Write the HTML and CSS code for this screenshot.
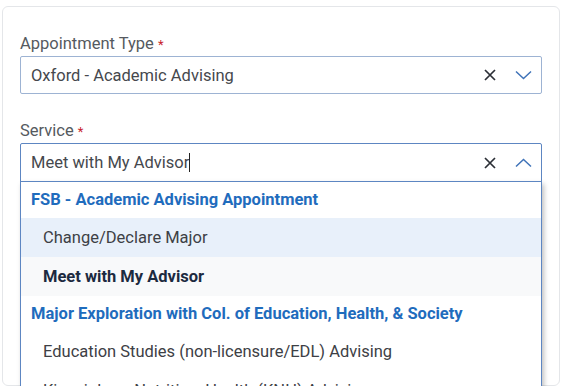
FILE: index.html
```html
<!DOCTYPE html>
<html lang="en">
<head>
    <meta charset="UTF-8">
    <title>Schedule Appointment</title>
    <link rel="stylesheet" href="styles.css">
</head>
<body>
    <div class="card">
        <div class="field">
            <label class="field-label">Appointment Type <span class="req">*</span></label>
            <div class="select">
                <span class="select-value">Oxford - Academic Advising</span>
                <span class="select-clear">
                    <svg width="12" height="12" viewBox="0 0 12 12"><path d="M1 1 L11 11 M11 1 L1 11" stroke="#2b2f36" stroke-width="1.7" fill="none"/></svg>
                </span>
                <span class="select-arrow">
                    <svg width="17" height="10" viewBox="0 0 17 10"><path d="M1 1.5 L8.5 8.5 L16 1.5" stroke="#3f73b8" stroke-width="1.5" fill="none"/></svg>
                </span>
            </div>
        </div>

        <div class="field">
            <label class="field-label">Service <span class="req">*</span></label>
            <div class="combo">
                <div class="select select-open">
                    <span class="select-value">Meet with My Advisor<span class="caret"></span></span>
                    <span class="select-clear">
                        <svg width="12" height="12" viewBox="0 0 12 12"><path d="M1 1 L11 11 M11 1 L1 11" stroke="#2b2f36" stroke-width="1.7" fill="none"/></svg>
                    </span>
                    <span class="select-arrow">
                        <svg width="17" height="10" viewBox="0 0 17 10"><path d="M1 8.5 L8.5 1.5 L16 8.5" stroke="#3f73b8" stroke-width="1.5" fill="none"/></svg>
                    </span>
                </div>
                <ul class="menu">
                    <li class="menu-group">FSB - Academic Advising Appointment</li>
                    <li class="menu-item hover">Change/Declare Major</li>
                    <li class="menu-item selected">Meet with My Advisor</li>
                    <li class="menu-group">Major Exploration with Col. of Education, Health, &amp; Society</li>
                    <li class="menu-item">Education Studies (non-licensure/EDL) Advising</li>
                    <li class="menu-item">Kinesiology, Nutrition, Health (KNH) Advising</li>
                </ul>
            </div>
        </div>
    </div>
</body>
</html>
```

FILE: styles.css
```css
body {
    margin: 0;
    background: #ffffff;
    font-family: Roboto, "Liberation Sans", Arial, sans-serif;
    overflow: hidden;
}
.card {
    margin: 6px 7px 0 2px;
    height: 380px;
    box-sizing: border-box;
    padding: 28px 17px 0 17px;
    background: white;
    border: 1px solid #e4e6e9;
    border-radius: 6px;
}
.field {
    margin-bottom: 28px;
}
.field-label {
    display: block;
    font-size: 16.5px;
    line-height: 18px;
    color: #555a60;
    margin-bottom: 2px;
}
.req {
    color: #c8242c;
    font-size: 13px;
}
.select {
    display: flex;
    align-items: center;
    height: 38px;
    box-sizing: border-box;
    border: 1px solid #9db3d3;
    border-radius: 2px;
    padding: 0 9px 0 10px;
    background: white;
}
.select-value {
    flex: 1;
    font-size: 16.5px;
    color: #45484d;
}
.select-clear {
    display: flex;
    margin-right: 19px;
}
.select-arrow {
    display: flex;
}
.combo {
    position: relative;
}
.select-open {
    height: 39px;
    border-color: #5d86c2;
    border-radius: 2px 2px 0 0;
}
.caret {
    display: inline-block;
    width: 1px;
    height: 19px;
    background: #222;
    vertical-align: -4px;
}
.menu {
    position: absolute;
    left: 0;
    right: 0;
    top: 38px;
    margin: 0;
    padding: 0;
    list-style: none;
    background: white;
    border: 1px solid #5d86c2;
    box-shadow: 2px 3px 5px rgba(0,0,0,0.25);
}
.menu-group {
    height: 36px;
    line-height: 36px;
    padding-left: 10px;
    font-size: 16.5px;
    font-weight: bold;
    color: #1f6cbd;
}
.menu-item {
    height: 39px;
    line-height: 39px;
    padding-left: 22px;
    font-size: 16.5px;
    color: #3d4045;
}
.menu-item.hover {
    background: #e8f0fa;
}
.menu-item.selected {
    background: #f8f9fa;
    font-weight: bold;
    color: #1c2a40;
}
```
